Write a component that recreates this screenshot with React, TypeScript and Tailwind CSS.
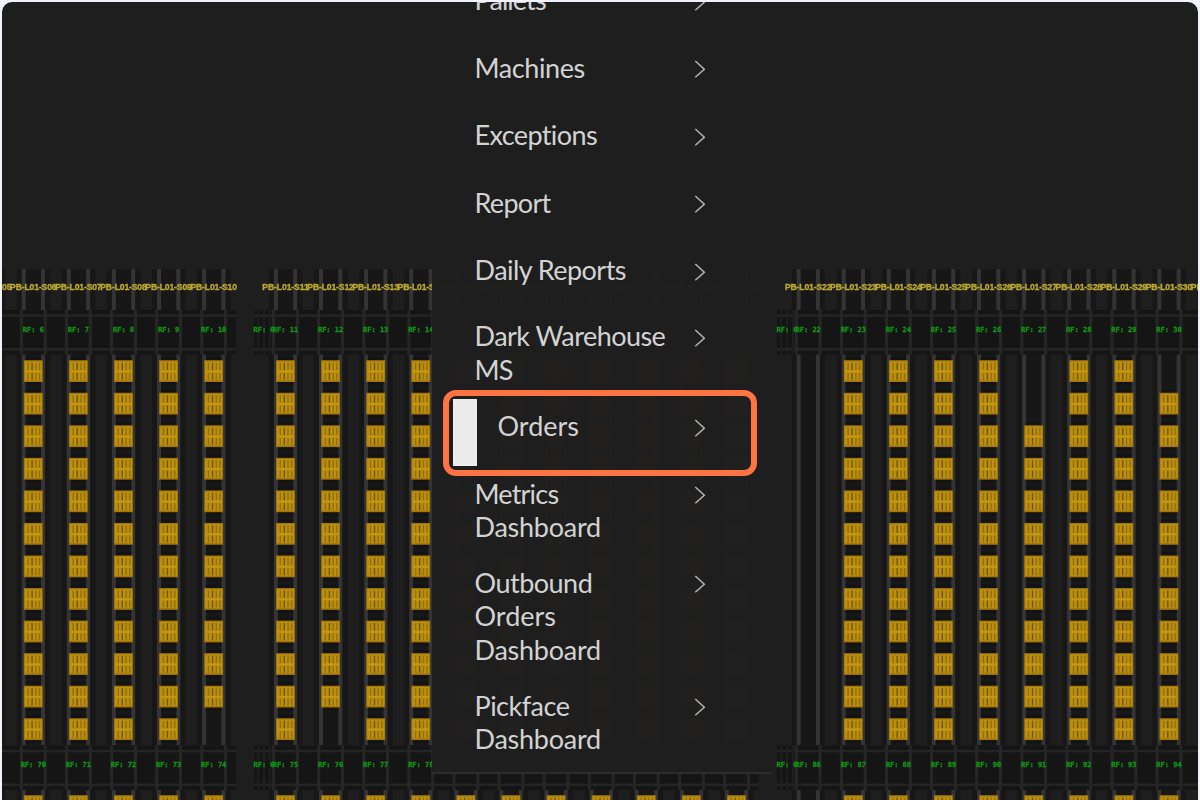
import React from "react";

const PITCH = 45.1;
const ROW_PITCH = 32.55;
const ROWS = Array.from({ length: 12 }, (_, i) => i);

type Group = { start: number; count: number; firstX: number; left: number; right: number; lead: boolean };

const GROUPS: Group[] = [
  { start: 5, count: 6, firstX: -11.8, left: 0, right: 236, lead: false },
  { start: 11, count: 11, firstX: 285.5, left: 254, right: 758, lead: true },
  { start: 22, count: 10, firstX: 808.2, left: 777, right: 1200, lead: true },
];

function isEmpty(col: number, row: number) {
  if (col === 22) return true;
  if (col === 27) return row < 2;
  if (col === 30) return row === 0;
  return (col === 10 || col === 12) && row === 11;
}

function Tote({ x, y }: { x: number; y: number }) {
  return (
    <g transform={`translate(${x - 9.5} ${y})`}>
      <rect width="18.9" height="21.8" fill="#a1750b" />
      <rect x="1" y="1.2" width="17" height="19" fill="#bc900f" />
      {[3.6, 7.6, 11.4, 15].map((sx, i) => (
        <g key={sx} fill={i === 1 ? "#6f540a" : "#946e0c"}>
          <rect x={sx} y="2.5" width="1.4" height="7.5" />
          <rect x={sx} y="12.6" width="1.4" height="7" />
        </g>
      ))}
      <rect x="1" y="10.4" width="17" height="1.6" fill="#c6980f" />
    </g>
  );
}

function Column({ x, col }: { x: number; col: number }) {
  return (
    <g>
      {[[269, 41], [354, 391], [790, 12]].map(([y, h]) => (
        <g key={y}>
          <rect x={x - 16.5} y={y} width="33.5" height={h} fill="#171717" />
          <rect x={x - 11.6} y={y} width="4" height={h} fill="#343434" />
          <rect x={x + 7.7} y={y} width="4" height={h} fill="#343434" />
        </g>
      ))}
      {ROWS.filter((r) => !isEmpty(col, r)).map((r) => (
        <g key={r}>
          <rect x={x - 7.6} y={357 + r * ROW_PITCH} width="15.3" height="28" fill="#121312" />
          <Tote x={x} y={360.2 + r * ROW_PITCH} />
        </g>
      ))}
      {col !== 22 && <Tote x={x} y={795.2} />}
    </g>
  );
}

function Aisle({ group, y, offset }: { group: Group; y: number; offset: number }) {
  const cols = Array.from({ length: group.count }, (_, i) => i);
  return (
    <g>
      <rect x={group.left} y={y} width={group.right - group.left} height="44.5" fill="#151515" />
      <rect x={group.left} y={y + 4.3} width={group.right - group.left} height="2.6" fill="#242424" />
      <rect x={group.left} y={y + 38} width={group.right - group.left} height="2.6" fill="#242424" />
      {group.lead &&
        [3, 9, 15].map((dx) => (
          <rect key={dx} x={group.left + dx} y={y} width="2" height="44.5" fill="#1e1e1e" />
        ))}
      {cols.map((i) => {
        const x = group.firstX + i * PITCH;
        return (
          <g key={i}>
            <rect x={x - 13.5} y={y} width="3.2" height="44.5" fill="#262626" />
            <rect x={x + 10.3} y={y} width="3.2" height="44.5" fill="#262626" />
          </g>
        );
      })}
      <g
        fill="#109614"
        stroke="#109614"
        strokeWidth="0.35"
        fontFamily="DejaVu Sans Mono, Liberation Mono, monospace"
        fontSize="7"
        fontWeight="700"
      >
        {group.lead && <text x={group.left - 0.5} y={y + 21.8}>RF: 0</text>}
        {cols.map((i) => (
          <text key={i} x={group.firstX + i * PITCH} y={y + 21.8} textAnchor="middle">
            {`RF: ${group.start + i + offset}`}
          </text>
        ))}
      </g>
    </g>
  );
}

function WarehouseMap() {
  return (
    <svg className="block h-[798px] w-[1196px] blur-[0.4px]" viewBox="2 2 1196 798">
      {GROUPS.map((group) => (
        <g key={group.start}>
          {Array.from({ length: group.count }, (_, i) => (
            <Column key={i} x={group.firstX + i * PITCH} col={group.start + i} />
          ))}
          <Aisle group={group} y={310} offset={0} />
          <Aisle group={group} y={745.5} offset={64} />
          <g
            fill="#bba730"
            stroke="#bba730"
            strokeWidth="0.35"
            fontFamily="Liberation Sans, Arial, sans-serif"
            fontSize="8.6"
            fontWeight="700"
          >
            {Array.from({ length: group.count }, (_, i) => (
              <text key={i} x={group.firstX + i * PITCH} y="290" textAnchor="middle" textLength="46.5">
                {`PB-L01-S${String(group.start + i).padStart(2, "0")}`}
              </text>
            ))}
          </g>
        </g>
      ))}
    </svg>
  );
}

type Item = { lines: [string, string][]; height: string; active?: boolean };

const ITEMS: Item[] = [
  { lines: [["Pallets", "tracking-[-0.9px]"]], height: "h-[67.5px]" },
  { lines: [["Machines", "tracking-[-0.4px]"]], height: "h-[67.5px]" },
  { lines: [["Exceptions", "tracking-[-0.6px]"]], height: "h-[67.5px]" },
  { lines: [["Report", "tracking-[-0.7px]"]], height: "h-[67.5px]" },
  { lines: [["Daily Reports", "tracking-[-0.55px]"]], height: "h-[66px]" },
  { lines: [["Dark Warehouse", "tracking-[-0.55px]"], ["MS", "tracking-[-0.8px]"]], height: "h-[90px]" },
  { lines: [["Orders", "tracking-normal"]], height: "h-[67.5px]", active: true },
  { lines: [["Metrics", "tracking-[-0.8px]"], ["Dashboard", "tracking-[-0.25px]"]], height: "h-[89px]" },
  {
    lines: [["Outbound", "tracking-[-0.5px]"], ["Orders", "tracking-normal"], ["Dashboard", "tracking-[-0.25px]"]],
    height: "h-[123px]",
  },
  { lines: [["Pickface", "tracking-[-0.5px]"], ["Dashboard", "tracking-[-0.25px]"]], height: "h-[80px]" },
];

function Chevron() {
  return (
    <svg className="mt-[9.6px] h-[18px] w-3 shrink-0" viewBox="0 0 12 18" fill="none" stroke="#b4b4b4" strokeWidth="1.5">
      <path d="M1.3 1 L10.3 9.2 L1.3 17.2" />
    </svg>
  );
}

function Menu() {
  return (
    <nav className="flex h-[772px] w-[340px] flex-col overflow-hidden border-b-2 border-[#2d2d2d] bg-[#1e1e1e]/[0.985] font-['Lato',sans-serif] text-[27px] leading-[33.7px] text-[#d3d3d3]">
      <div className="-mt-[19px] flex flex-col pr-[65.6px] pl-[43px]">
        {ITEMS.map((item, i) => (
          <div key={i} className={`flex shrink-0 items-start justify-between ${item.height}`}>
            <div className={item.active ? "pl-[23px]" : ""}>
              {item.lines.map(([text, tracking]) => (
                <div key={text} className={`whitespace-nowrap ${tracking}`}>{text}</div>
              ))}
            </div>
            <Chevron />
          </div>
        ))}
      </div>
    </nav>
  );
}

export default function App() {
  return (
    <main className="h-[800px] w-[1200px] overflow-hidden bg-[#f1f2fb] px-0.5 pt-0.5">
      <div className="relative h-[798px] overflow-hidden rounded-t-[10px] bg-[#1e1e1e]">
        <WarehouseMap />
        <div className="absolute top-0 left-[429.5px]">
          <Menu />
        </div>
        <div className="absolute top-[388px] left-[441px] h-[86px] w-[314px] rounded-[13px] border-[6px] border-[#ff7442] pt-[3px] pl-1">
          <div className="h-[67px] w-6 bg-[#ececec]" />
        </div>
      </div>
    </main>
  );
}
